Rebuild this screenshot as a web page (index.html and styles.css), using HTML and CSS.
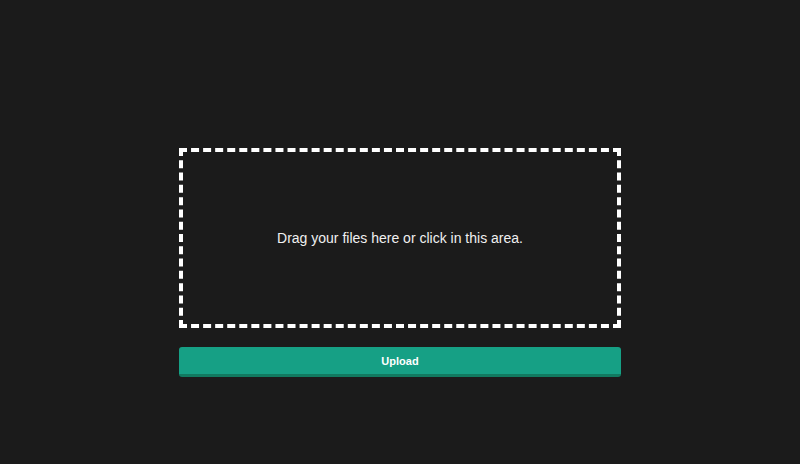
FILE: index.html
```html
<!DOCTYPE html>
<html lang="en">
<head>
<meta charset="utf-8">
<title>Upload</title>
<link rel="stylesheet" href="styles.css">
</head>
<body>
<form class="upload-form">
  <div class="drop-zone">
    <p class="drop-text">Drag your files here or click in this area.</p>
  </div>
  <button type="button" class="upload-btn">Upload</button>
</form>
</body>
</html>
```
FILE: styles.css
```css
html, body {
  margin: 0;
  padding: 0;
  height: 100%;
}
body {
  background: #1b1b1b;
  font-family: "Liberation Sans", Arial, sans-serif;
}
.upload-form {
  width: 442px;
  margin: 0 auto;
  padding-top: 148px;
  display: flex;
  flex-direction: column;
}
.drop-zone {
  box-sizing: border-box;
  height: 180px;
  border: 4px dashed #ffffff;
  display: flex;
  align-items: center;
  justify-content: center;
}
.drop-text {
  margin: 0;
  color: #f0f0f0;
  font-size: 14px;
  line-height: 16px;
}
.upload-btn {
  margin-top: 19px;
  height: 30px;
  box-sizing: border-box;
  border: none;
  border-bottom: 3px solid #117a60;
  border-radius: 3px;
  background: #16a085;
  color: #ffffff;
  font-family: "Liberation Sans", Arial, sans-serif;
  font-weight: bold;
  font-size: 11px;
  padding: 0;
}
```
